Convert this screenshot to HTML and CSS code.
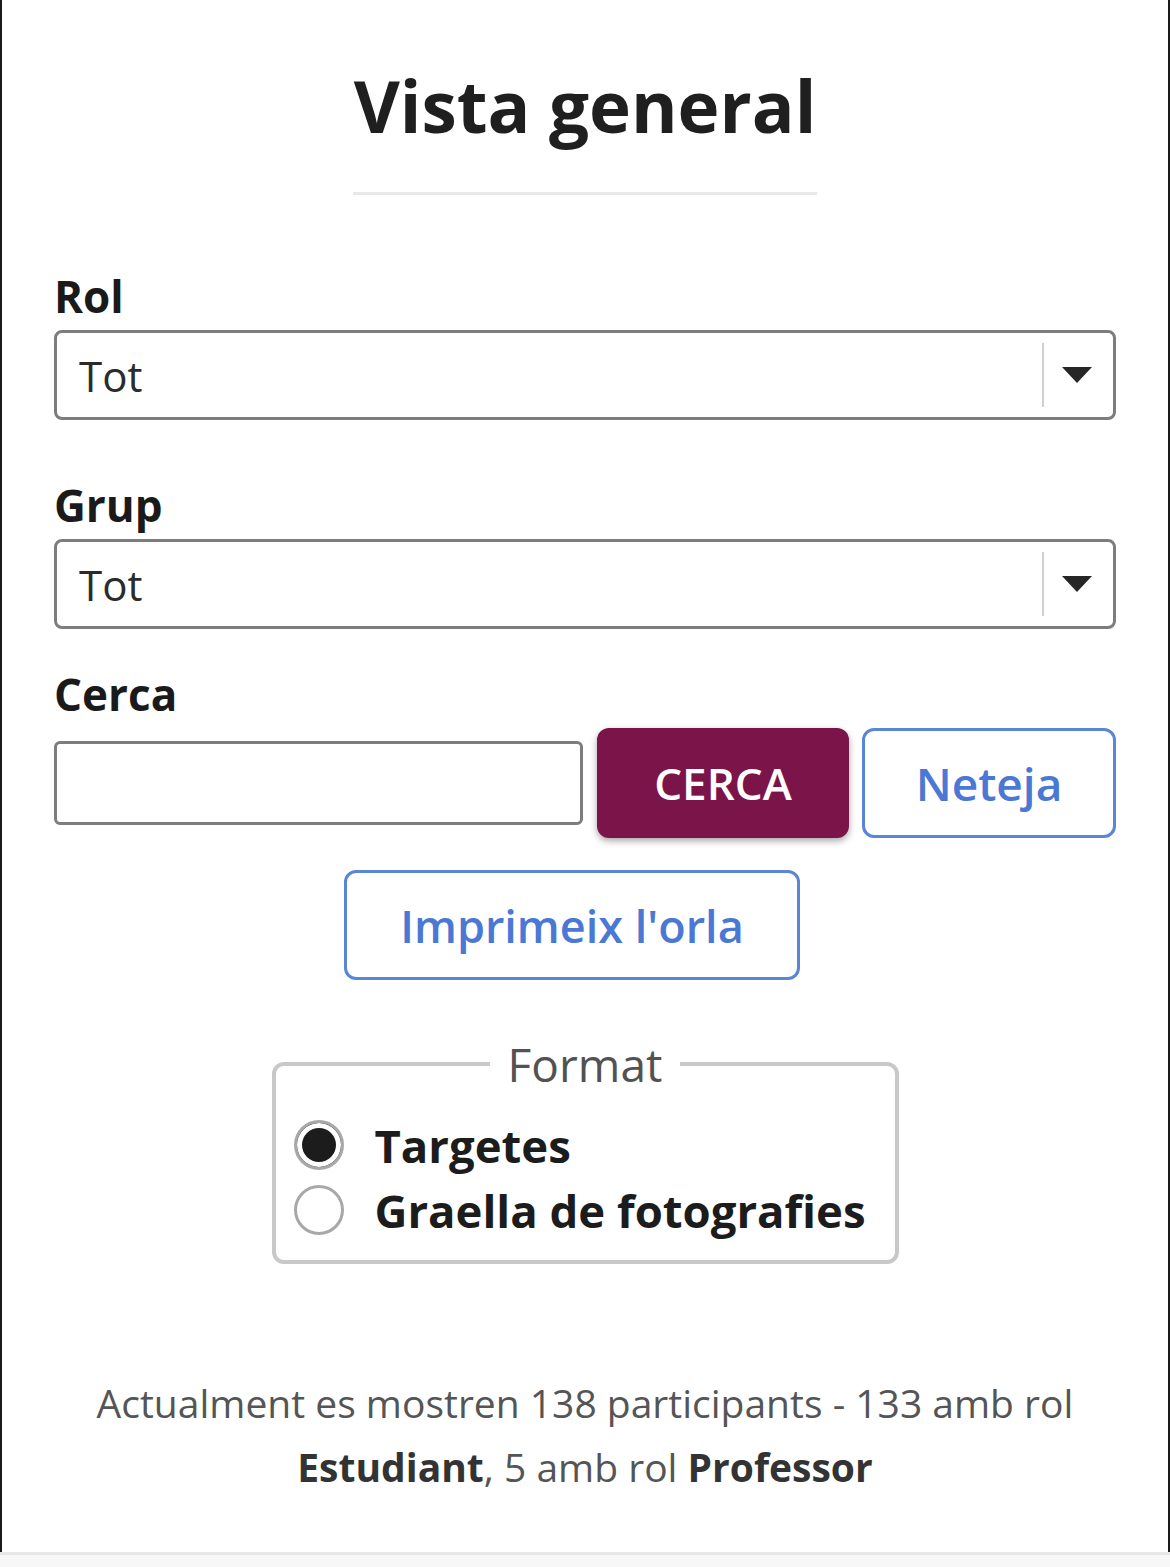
FILE: index.html
```html
<!DOCTYPE html>
<html lang="ca">
<head>
<meta charset="utf-8">
<title>Vista general</title>
<link rel="stylesheet" href="styles.css">
</head>
<body>
<div class="page">
  <div class="content">
    <div class="title-wrap"><h1 class="title">Vista general</h1></div>

    <label class="field-label label-rol">Rol</label>
    <div class="select">
      <span class="select-value">Tot</span>
      <span class="select-divider"></span>
      <span class="select-arrow"></span>
    </div>

    <label class="field-label label-grup">Grup</label>
    <div class="select">
      <span class="select-value">Tot</span>
      <span class="select-divider"></span>
      <span class="select-arrow"></span>
    </div>

    <label class="field-label label-cerca">Cerca</label>
    <div class="search-row">
      <div class="search-input"></div>
      <button class="btn btn-primary">CERCA</button>
      <button class="btn btn-outline btn-clear">Neteja</button>
    </div>

    <div class="print-row">
      <button class="btn btn-outline btn-print">Imprimeix l'orla</button>
    </div>

    <fieldset class="format">
      <legend class="format-legend">Format</legend>
      <div class="radio-row"><span class="radio checked"></span><span class="radio-label">Targetes</span></div>
      <div class="radio-row"><span class="radio"></span><span class="radio-label">Graella de fotografies</span></div>
    </fieldset>

    <p class="summary">Actualment es mostren 138 participants - 133 amb rol <b>Estudiant</b>, 5 amb rol <b>Professor</b></p>
  </div>
</div>
<div class="bottom-strip"></div>
</body>
</html>
```
FILE: styles.css
```css
html, body {
  margin: 0;
  padding: 0;
  background: #f7f7f7;
}
body {
  font-family: "Open Sans", "Noto Sans", sans-serif;
  color: #1e1e1e;
}
.page {
  box-sizing: border-box;
  width: 1170px;
  height: 1552px;
  background: #ffffff;
  border-left: 2px solid #1a1a1a;
  border-right: 2px solid #1a1a1a;
}
.content {
  padding: 0 52px;
  display: flex;
  flex-direction: column;
}
.title-wrap {
  width: 464px;
  margin: 0 auto;
  padding-top: 60px;
  padding-bottom: 41px;
  border-bottom: 3px solid #e8e8e8;
  text-align: center;
}
.title {
  margin: 0;
  font-size: 71px;
  line-height: 91px;
  font-weight: 700;
  color: #1f1f1f;
  white-space: nowrap;
}
.field-label {
  display: block;
  font-size: 44px;
  line-height: 52px;
  font-weight: 700;
  color: #1a1a1a;
  margin-bottom: 8px;
}
.label-rol { margin-top: 75px; }
.label-grup { margin-top: 59px; }
.label-cerca { margin-top: 39px; }
.select {
  box-sizing: border-box;
  height: 90px;
  border: 3px solid #7d7d7d;
  border-radius: 8px;
  display: flex;
  align-items: center;
  padding-left: 22px;
}
.select-value {
  flex: 1;
  font-size: 42px;
  color: #2b2b2b;
}
.select-divider {
  width: 2px;
  height: 64px;
  background: #cfcfcf;
}
.select-arrow {
  width: 0;
  height: 0;
  border-left: 15px solid transparent;
  border-right: 15px solid transparent;
  border-top: 16px solid #262626;
  margin: 0 21px 0 18px;
}
.search-row {
  display: flex;
  align-items: center;
  height: 110px;
}
.search-input {
  box-sizing: border-box;
  width: 529px;
  height: 84px;
  border: 3px solid #7d7d7d;
  border-radius: 6px;
}
.btn {
  box-sizing: border-box;
  height: 110px;
  border-radius: 12px;
  font-family: "Open Sans", "Noto Sans", sans-serif;
  font-size: 44px;
  font-weight: 600;
  padding: 0;
  cursor: pointer;
}
.btn-primary {
  width: 252px;
  margin-left: 14px;
  background: #7a1449;
  color: #ffffff;
  border: none;
  box-shadow: 0 3px 7px rgba(0, 0, 0, 0.35);
}
.btn-outline {
  background: #ffffff;
  color: #4a78d4;
  border: 3px solid #5a86d6;
}
.btn-clear {
  width: 254px;
  margin-left: 13px;
  font-size: 46px;
}
.print-row {
  display: flex;
  margin-top: 32px;
}
.btn-print {
  width: 456px;
  margin-left: 290px;
  font-size: 45px;
}
.format {
  box-sizing: border-box;
  width: 627px;
  margin: 58px auto 0;
  border: 4px solid #c8c8c8;
  border-radius: 12px;
  padding: 22px 18px 18px;
}
.format-legend {
  margin: 0 auto;
  padding: 0 18px;
  font-size: 46px;
  line-height: 52px;
  color: #525252;
}
.radio-row {
  display: flex;
  align-items: center;
  height: 65px;
}
.radio {
  box-sizing: border-box;
  width: 50px;
  height: 50px;
  border-radius: 50%;
  border: 3px solid #a8a8a8;
  background: #ffffff;
  margin-right: 31px;
  flex: none;
}
.radio.checked {
  background: #1c1c1c;
  box-shadow: inset 0 0 0 5px #ffffff;
}
.radio-label {
  font-size: 45.5px;
  font-weight: 700;
  color: #1c1c1c;
  white-space: nowrap;
}
.summary {
  width: 1000px;
  margin: 107px auto 0;
  text-align: center;
  font-size: 39px;
  line-height: 64px;
  color: #555555;
}
.summary b {
  color: #333333;
  font-weight: 700;
}
.bottom-strip {
  width: 1170px;
  height: 15px;
  border-top: 3px solid #e6e6e6;
  background: #f7f7f7;
}
```
